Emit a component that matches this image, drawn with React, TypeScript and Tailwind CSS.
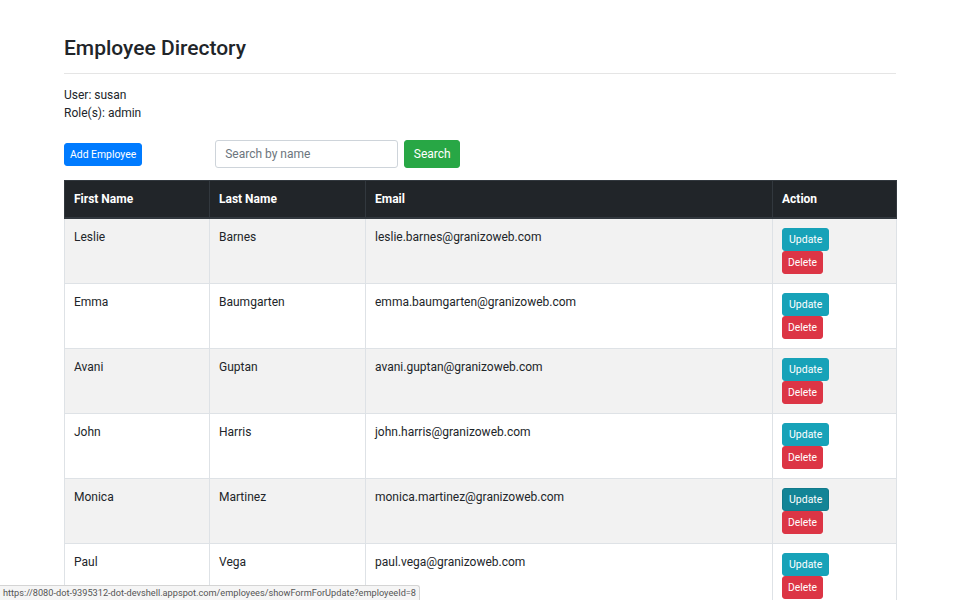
const employees = [
  { first: "Leslie", last: "Barnes", email: "leslie.barnes@granizoweb.com" },
  { first: "Emma", last: "Baumgarten", email: "emma.baumgarten@granizoweb.com" },
  { first: "Avani", last: "Guptan", email: "avani.guptan@granizoweb.com" },
  { first: "John", last: "Harris", email: "john.harris@granizoweb.com" },
  { first: "Monica", last: "Martinez", email: "monica.martinez@granizoweb.com", hover: true },
  { first: "Paul", last: "Vega", email: "paul.vega@granizoweb.com" },
];

export default function App() {
  return (
    <div className="relative min-h-screen bg-white font-['Roboto',sans-serif] text-[12px] leading-[18px] text-[#212529]">
      <div className="px-16 pt-[36px]">
        <h3 className="text-[21px] font-medium leading-[25px]">Employee Directory</h3>
        <hr className="mt-3 border-t border-[rgba(0,0,0,0.1)]" />

        <div className="mt-3">
          <div>User: susan</div>
          <div>Role(s): admin</div>
        </div>

        <div className="mt-[18px] flex items-center">
          <button className="h-[23px] rounded-[3px] border border-[#007bff] bg-[#007bff] px-[5px] text-[10.4px] leading-[15px] text-white">
            Add Employee
          </button>
          <div className="ml-[73px] flex items-center gap-[6px]">
            <input
              placeholder="Search by name"
              className="h-[28px] w-[183px] rounded-[3px] border border-[#ced4da] px-[9px] text-[12px] text-[#495057] placeholder:text-[#6c757d] outline-none"
            />
            <button className="h-[28px] w-[56px] rounded-[3px] border border-[#28a745] bg-[#28a745] text-[12px] text-white">
              Search
            </button>
          </div>
        </div>

        <table className="mt-3 w-[832px] table-fixed border-collapse">
          <colgroup>
            <col className="w-[145px]" />
            <col className="w-[156px]" />
            <col className="w-[407px]" />
            <col className="w-[124px]" />
          </colgroup>
          <thead>
            <tr className="bg-[#212529] text-left font-bold text-white">
              <th className="border border-[#32383e] border-b-2 px-[9px] py-[9px]">First Name</th>
              <th className="border border-[#32383e] border-b-2 px-[9px] py-[9px]">Last Name</th>
              <th className="border border-[#32383e] border-b-2 px-[9px] py-[9px]">Email</th>
              <th className="border border-[#32383e] border-b-2 px-[9px] py-[9px]">Action</th>
            </tr>
          </thead>
          <tbody>
            {employees.map((e, i) => (
              <tr key={i} className={i % 2 === 0 ? "bg-[#f2f2f2]" : "bg-white"}>
                <td className="border border-[#dee2e6] px-[9px] py-[9px] align-top">{e.first}</td>
                <td className="border border-[#dee2e6] px-[9px] py-[9px] align-top">{e.last}</td>
                <td className="border border-[#dee2e6] px-[9px] py-[9px] align-top">{e.email}</td>
                <td className="border border-[#dee2e6] px-[9px] py-[9px] align-top">
                  <div className="flex flex-col items-start">
                    <button
                      className={`h-[23px] rounded-[3px] border px-[6px] text-[10.5px] leading-[15px] text-white ${
                        e.hover ? "border-[#117a8b] bg-[#138496]" : "border-[#17a2b8] bg-[#17a2b8]"
                      }`}
                    >
                      Update
                    </button>
                    <button className="h-[23px] rounded-[3px] border border-[#dc3545] bg-[#dc3545] px-[5px] text-[10.3px] leading-[15px] text-white">
                      Delete
                    </button>
                  </div>
                </td>
              </tr>
            ))}
          </tbody>
        </table>
      </div>

      <div className="fixed bottom-0 left-0 h-[15px] rounded-tr-[3px] border-t border-r border-[#d4d4d4] bg-[#f5f5f5] px-[3px] text-[9.2px] leading-[14px] text-[#555]">
        https://8080-dot-9395312-dot-devshell.appspot.com/employees/showFormForUpdate?employeeId=8
      </div>
    </div>
  );
}
